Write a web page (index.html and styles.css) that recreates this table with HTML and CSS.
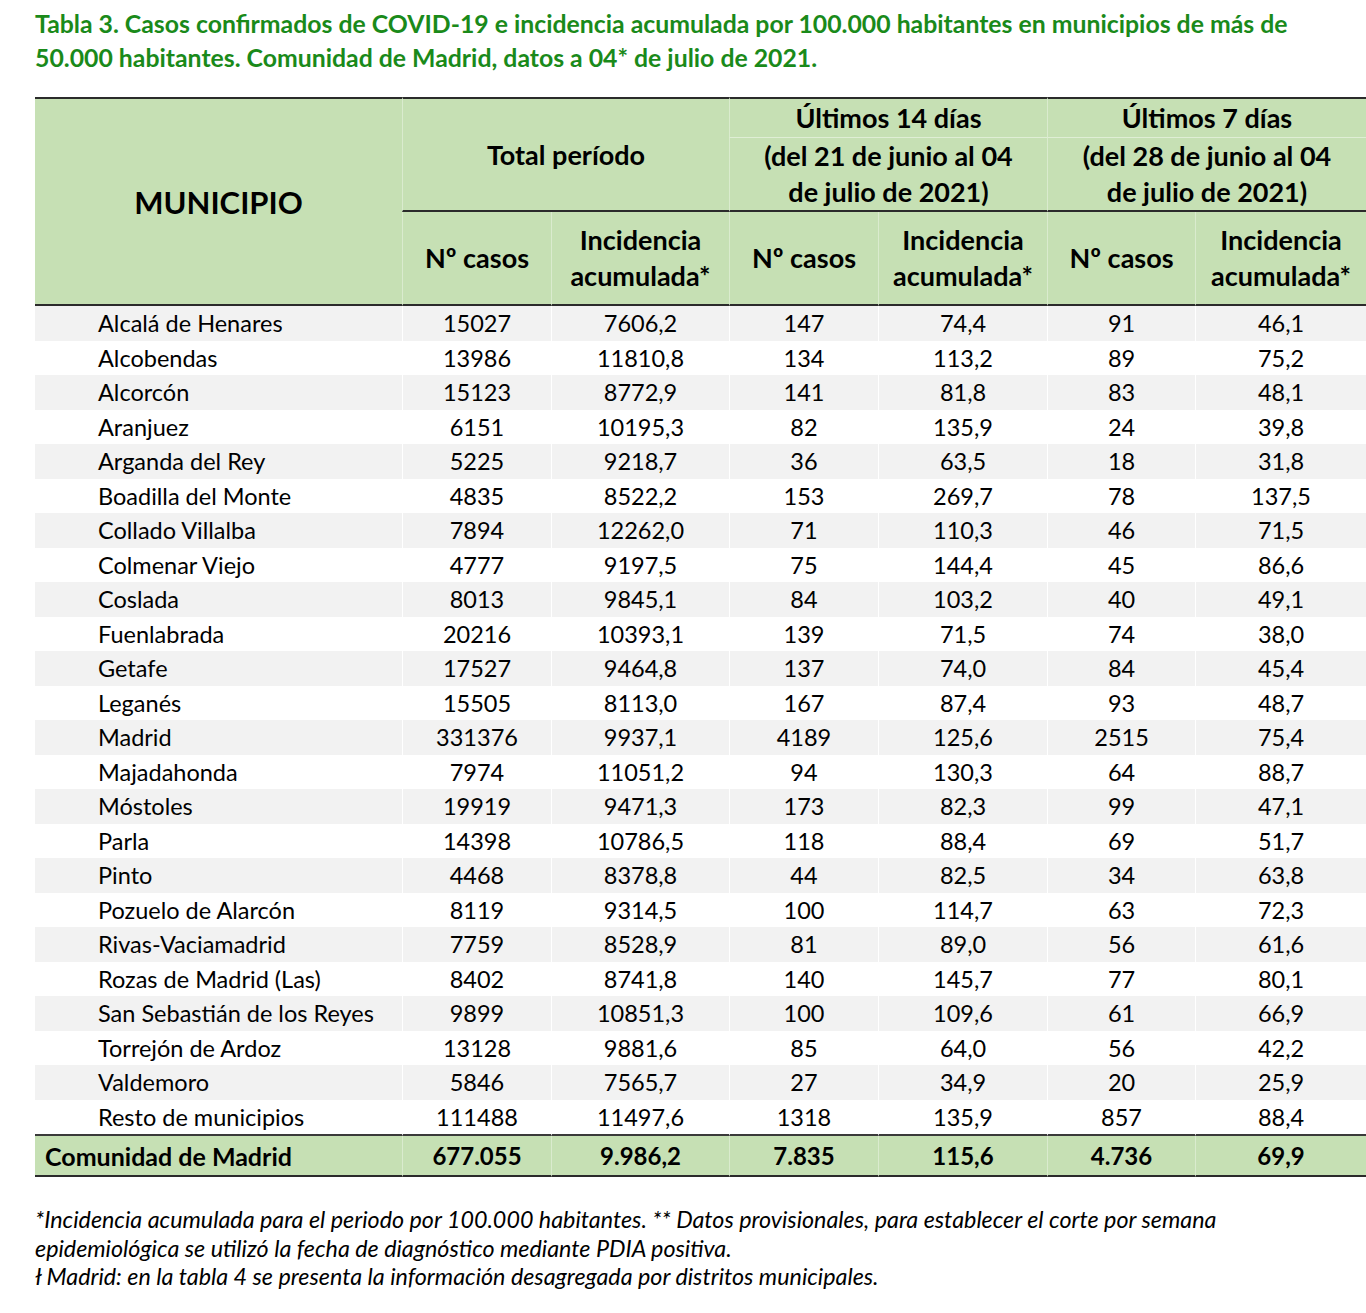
FILE: index.html
```html
<!DOCTYPE html>
<html lang="es">
<head>
<meta charset="utf-8">
<title>Tabla 3</title>
<link rel="stylesheet" href="styles.css">
</head>
<body>
<div class="page">
  <h1 class="title">Tabla 3. Casos confirmados de COVID-19 e incidencia acumulada por 100.000 habitantes en municipios de más de<br>50.000 habitantes. Comunidad de Madrid, datos a 04* de julio de 2021.</h1>
  <table class="data">
    <colgroup>
      <col class="c-mun"><col class="c-n1"><col class="c-i1"><col class="c-n2"><col class="c-i2"><col class="c-n3"><col class="c-i3">
    </colgroup>
    <thead>
      <tr class="hr-a">
        <th rowspan="3" class="mun-h first">MUNICIPIO</th>
        <th rowspan="2" colspan="2" class="grp total-h">Total período</th>
        <th colspan="2" class="grp top-only">Últimos 14 días</th>
        <th colspan="2" class="grp top-only">Últimos 7 días</th>
      </tr>
      <tr class="hr-b">
        <th colspan="2" class="grp range">(del 21 de junio al 04<br>de julio de 2021)</th>
        <th colspan="2" class="grp range">(del 28 de junio al 04<br>de julio de 2021)</th>
      </tr>
      <tr class="hr-c">
        <th class="sub">Nº casos</th>
        <th class="sub">Incidencia<br>acumulada*</th>
        <th class="sub">Nº casos</th>
        <th class="sub">Incidencia<br>acumulada*</th>
        <th class="sub">Nº casos</th>
        <th class="sub">Incidencia<br>acumulada*</th>
      </tr>
    </thead>
    <tbody>
      <tr><td class="name">Alcalá de Henares</td><td>15027</td><td>7606,2</td><td>147</td><td>74,4</td><td>91</td><td>46,1</td></tr>
      <tr><td class="name">Alcobendas</td><td>13986</td><td>11810,8</td><td>134</td><td>113,2</td><td>89</td><td>75,2</td></tr>
      <tr><td class="name">Alcorcón</td><td>15123</td><td>8772,9</td><td>141</td><td>81,8</td><td>83</td><td>48,1</td></tr>
      <tr><td class="name">Aranjuez</td><td>6151</td><td>10195,3</td><td>82</td><td>135,9</td><td>24</td><td>39,8</td></tr>
      <tr><td class="name">Arganda del Rey</td><td>5225</td><td>9218,7</td><td>36</td><td>63,5</td><td>18</td><td>31,8</td></tr>
      <tr><td class="name">Boadilla del Monte</td><td>4835</td><td>8522,2</td><td>153</td><td>269,7</td><td>78</td><td>137,5</td></tr>
      <tr><td class="name">Collado Villalba</td><td>7894</td><td>12262,0</td><td>71</td><td>110,3</td><td>46</td><td>71,5</td></tr>
      <tr><td class="name">Colmenar Viejo</td><td>4777</td><td>9197,5</td><td>75</td><td>144,4</td><td>45</td><td>86,6</td></tr>
      <tr><td class="name">Coslada</td><td>8013</td><td>9845,1</td><td>84</td><td>103,2</td><td>40</td><td>49,1</td></tr>
      <tr><td class="name">Fuenlabrada</td><td>20216</td><td>10393,1</td><td>139</td><td>71,5</td><td>74</td><td>38,0</td></tr>
      <tr><td class="name">Getafe</td><td>17527</td><td>9464,8</td><td>137</td><td>74,0</td><td>84</td><td>45,4</td></tr>
      <tr><td class="name">Leganés</td><td>15505</td><td>8113,0</td><td>167</td><td>87,4</td><td>93</td><td>48,7</td></tr>
      <tr><td class="name">Madrid</td><td>331376</td><td>9937,1</td><td>4189</td><td>125,6</td><td>2515</td><td>75,4</td></tr>
      <tr><td class="name">Majadahonda</td><td>7974</td><td>11051,2</td><td>94</td><td>130,3</td><td>64</td><td>88,7</td></tr>
      <tr><td class="name">Móstoles</td><td>19919</td><td>9471,3</td><td>173</td><td>82,3</td><td>99</td><td>47,1</td></tr>
      <tr><td class="name">Parla</td><td>14398</td><td>10786,5</td><td>118</td><td>88,4</td><td>69</td><td>51,7</td></tr>
      <tr><td class="name">Pinto</td><td>4468</td><td>8378,8</td><td>44</td><td>82,5</td><td>34</td><td>63,8</td></tr>
      <tr><td class="name">Pozuelo de Alarcón</td><td>8119</td><td>9314,5</td><td>100</td><td>114,7</td><td>63</td><td>72,3</td></tr>
      <tr><td class="name">Rivas-Vaciamadrid</td><td>7759</td><td>8528,9</td><td>81</td><td>89,0</td><td>56</td><td>61,6</td></tr>
      <tr><td class="name">Rozas de Madrid (Las)</td><td>8402</td><td>8741,8</td><td>140</td><td>145,7</td><td>77</td><td>80,1</td></tr>
      <tr><td class="name">San Sebastián de los Reyes</td><td>9899</td><td>10851,3</td><td>100</td><td>109,6</td><td>61</td><td>66,9</td></tr>
      <tr><td class="name">Torrejón de Ardoz</td><td>13128</td><td>9881,6</td><td>85</td><td>64,0</td><td>56</td><td>42,2</td></tr>
      <tr><td class="name">Valdemoro</td><td>5846</td><td>7565,7</td><td>27</td><td>34,9</td><td>20</td><td>25,9</td></tr>
      <tr class="last"><td class="name">Resto de municipios</td><td>111488</td><td>11497,6</td><td>1318</td><td>135,9</td><td>857</td><td>88,4</td></tr>
    </tbody>
    <tfoot>
      <tr class="total">
        <td class="name-total">Comunidad de Madrid</td><td>677.055</td><td>9.986,2</td><td>7.835</td><td>115,6</td><td>4.736</td><td>69,9</td>
      </tr>
    </tfoot>
  </table>
  <div class="notes">
    <p>*Incidencia acumulada para el periodo por 100.000 habitantes. ** Datos provisionales, para establecer el corte por semana<br>epidemiológica se utilizó la fecha de diagnóstico mediante PDIA positiva.</p>
    <p>ł Madrid: en la tabla 4 se presenta la información desagregada por distritos municipales.</p>
  </div>
</div>
</body>
</html>
```

FILE: styles.css
```css
html, body {
  margin: 0;
  padding: 0;
  background: #ffffff;
}

body {
  font-family: "Lato", "Open Sans", "Liberation Sans", sans-serif;
  color: #000000;
}

.page {
  padding: 7px 0 0 35px;
}

.title {
  margin: 0;
  font-size: 24.8px;
  line-height: 34px;
  font-weight: 700;
  color: #1a8a1a;
  white-space: nowrap;
}

.data {
  margin-top: 22px;
  width: 1331px;
  table-layout: fixed;
  border-collapse: separate;
  border-spacing: 0;
  font-size: 23.5px;
}

.c-mun { width: 367px; }
.c-n1 { width: 149px; }
.c-i1 { width: 178px; }
.c-n2 { width: 149px; }
.c-i2 { width: 169px; }
.c-n3 { width: 148px; }
.c-i3 { width: 171px; }

.data th {
  background: #c6e0b4;
  font-weight: 700;
  font-size: 27px;
  text-align: center;
  vertical-align: middle;
  padding: 0;
  line-height: 36px;
  border-left: 1px solid rgba(255, 255, 255, 0.35);
  white-space: nowrap;
}

.data th.first {
  border-left: none;
}

.hr-a th {
  border-top: 2px solid #2b2b2b;
}

.hr-a { height: 40px; }
.hr-b { height: 71px; }
.hr-c { height: 94px; }

.data th.mun-h {
  font-size: 31px;
  border-bottom: 2px solid #2b2b2b;
}

.total-h {
  border-bottom: 2px solid #2b2b2b;
}

.top-only {
  line-height: 36px;
}

.range {
  border-top: 1px solid rgba(255, 255, 255, 0.45);
  border-bottom: 2px solid #2b2b2b;
}

.hr-c th {
  border-bottom: 2px solid #2b2b2b;
}

.data td {
  padding: 0;
  height: 34.5px;
  line-height: 34px;
  text-align: center;
  vertical-align: middle;
  border-left: 1px solid #ffffff;
  white-space: nowrap;
}

.data td:first-child {
  border-left: none;
}

.data tbody tr:nth-child(odd) td {
  background: #f2f2f2;
}

.data td.name {
  text-align: left;
  padding-left: 63px;
}

.data tr.last td {
  border-bottom: 2px solid #3a3a3a;
}

.data tr.total td {
  background: #c6e0b4;
  font-weight: 700;
  font-size: 24px;
  height: 39px;
  border-left: 1px solid rgba(255, 255, 255, 0.35);
  border-bottom: 2px solid #2b2b2b;
}

.data tr.total td:first-child {
  border-left: none;
}

.data tr.total td.name-total {
  text-align: left;
  padding-left: 10px;
  font-size: 25px;
}

.notes {
  margin-top: 28px;
  font-style: italic;
  font-size: 23.3px;
  line-height: 28.5px;
}

.notes p {
  margin: 0;
  white-space: nowrap;
}
```
